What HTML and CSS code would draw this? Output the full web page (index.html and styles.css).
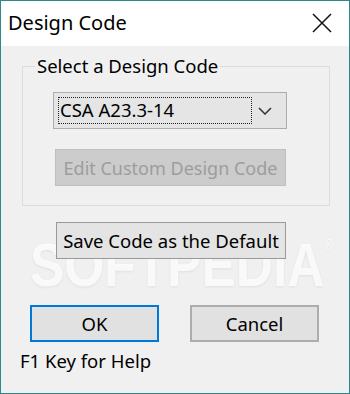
FILE: index.html
```
<!DOCTYPE html>
<html lang="en">
<head>
    <meta charset="UTF-8">
    <title>Design Code</title>
    <link rel="stylesheet" href="styles.css">
</head>
<body>
    <div class="window">
        <div class="titlebar">
            <span class="title">Design Code</span>
            <svg class="close" width="20" height="20" viewBox="0 0 20 20">
                <path d="M1 1 L19 19 M19 1 L1 19" stroke="#111" stroke-width="1.5" fill="none"/>
            </svg>
        </div>

        <div class="client">
            <div class="watermark">SOFTPEDIA<sup>®</sup></div>

            <fieldset class="group">
                <legend>Select a Design Code</legend>
                <div class="combo">
                    <span class="combo-text">CSA A23.3-14</span>
                    <svg class="chevron" width="14" height="8" viewBox="0 0 14 8">
                        <path d="M1 1 L7 7 L13 1" stroke="#333" stroke-width="1.5" fill="none"/>
                    </svg>
                </div>
                <button class="btn btn-disabled" disabled>Edit Custom Design Code</button>
            </fieldset>

            <button class="btn btn-save">Save Code as the Default</button>

            <div class="actions">
                <button class="btn btn-default">OK</button>
                <button class="btn btn-cancel">Cancel</button>
            </div>
            <div class="help">F1 Key for Help</div>
        </div>
    </div>
</body>
</html>
```

FILE: styles.css
```
* {
    box-sizing: border-box;
}

html, body {
    margin: 0;
    padding: 0;
    overflow: hidden;
}

body {
    font-family: "Noto Sans", "Open Sans", sans-serif;
    color: #000;
    background: #f0f0f0;
}

.window {
    width: 350px;
    height: 394px;
    border: 1px solid #2a8a8a;
    background: #f0f0f0;
    display: flex;
    flex-direction: column;
}

.titlebar {
    height: 45px;
    background: #fff;
    display: flex;
    align-items: center;
    justify-content: space-between;
    padding: 0 17px 0 7px;
    flex-shrink: 0;
}

.title {
    font-size: 20px;
    color: #000;
    margin-top: -2px;
}

.close {
    margin-top: -2px;
}

.client {
    position: relative;
    flex: 1;
    padding-top: 7px;
}

/* Group box */
.group {
    position: relative;
    margin: 0 19px 0 21px;
    padding: 0;
    border: 1px solid #dcdcdc;
    height: 153px;
}

legend {
    font-size: 18.5px;
    line-height: 26px;
    padding: 0 2px;
    margin-left: 12px;
}

.combo {
    width: 234px;
    height: 37px;
    margin: 13px 0 0 30px;
    background: #e5e5e5;
    border: 1px solid #adadad;
    display: flex;
    align-items: center;
    justify-content: space-between;
    padding: 4px 14px 4px 4px;
}

.combo-text {
    flex: 0 0 194px;
    height: 27px;
    border: 1px dotted #222;
    font-size: 18.5px;
    line-height: 24px;
    padding-left: 1px;
}

.btn {
    display: block;
    position: relative;
    font-family: "Noto Sans", "Open Sans", sans-serif;
    font-size: 18.5px;
    height: 37px;
    padding: 0;
    background: #e1e1e1;
    border: 1px solid #adadad;
    color: #000;
}

.btn-disabled {
    width: 231px;
    margin: 20px 0 0 32px;
    background: #cccccc;
    border-color: #bfbfbf;
    color: #9d9d9d;
    font-size: 18px;
}

.btn-save {
    width: 230px;
    margin: 16px 0 0 55px;
    background: #e4e4e4;
    border-color: #999;
}

.actions {
    display: flex;
    gap: 31px;
    margin: 46px 0 0 29px;
}

.btn-default,
.btn-cancel {
    width: 129px;
}

.btn-default {
    border: 2px solid #0078d7;
}

.btn-cancel {
    border: 2px solid #adadad;
}

.help {
    font-size: 18.5px;
    margin: 6px 0 0 19px;
}

/* faint watermark behind the lower buttons */
.watermark {
    position: absolute;
    left: 29px;
    top: 168px;
    font-family: "Liberation Sans", sans-serif;
    font-weight: bold;
    font-size: 62px;
    line-height: 62px;
    white-space: nowrap;
    transform: scaleX(0.83);
    transform-origin: left top;
    color: rgba(255, 255, 255, 0.8);
    text-shadow: 0 1px 3px rgba(0, 0, 0, 0.07);
    pointer-events: none;
}

.watermark sup {
    font-size: 14px;
    vertical-align: 36px;
}
```
